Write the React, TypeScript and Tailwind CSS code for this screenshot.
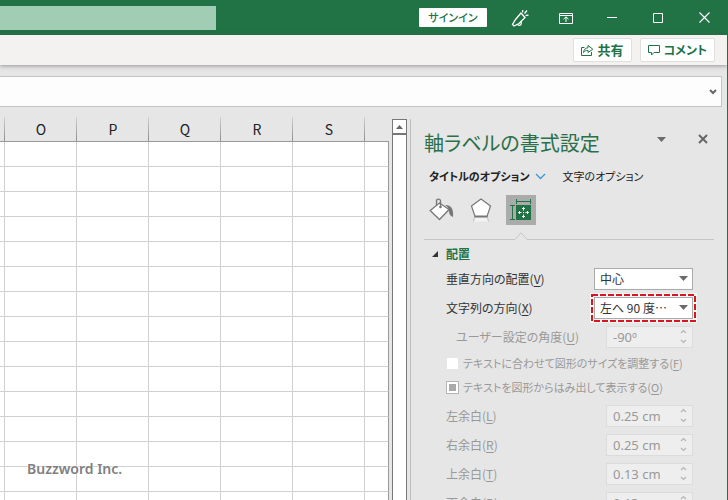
import { ReactNode, useState } from "react";

// ============================================================
// Excel ウィンドウ右側: タイトルバー、シート、書式設定ウィンドウ
// ============================================================

const COLUMNS = ["O", "P", "Q", "R", "S"];
const ROWS = Array.from({ length: 16 }, (_, i) => i);

const MARGINS = [
  { id: "left", label: "左余白", accessKey: "L", value: "0.25 cm" },
  { id: "right", label: "右余白", accessKey: "R", value: "0.25 cm" },
  { id: "top", label: "上余白", accessKey: "T", value: "0.13 cm" },
  { id: "bottom", label: "下余白", accessKey: "B", value: "0.13 cm" },
];

function TitleBar() {
  return (
    <header className="flex h-[35px] shrink-0 items-center bg-[#217346] text-white">
      <input
        type="search"
        aria-label="検索"
        className="h-6 w-[216px] bg-[#a0cdb3] px-2 text-xs outline-none"
      />
      <div className="flex-1" />
      <button
        type="button"
        className="mr-[10px] h-[19px] w-[68px] rounded-[1px] bg-white text-[11px] leading-[19px] font-medium text-[#217346]"
      >
        サインイン
      </button>
      <button type="button" aria-label="新機能" className="flex h-full w-[46px] items-center justify-center">
        <svg width="18" height="18" viewBox="0 0 18 18" fill="none" stroke="currentColor" strokeWidth="1.3">
          <path d="M10 4 4.500 10.500 1.500 15.500 3 17 8 14.500 14 8.500z" />
          <path d="M6.500 15.300c.8 1.700 3.500 1.300 3.700-.6v-2.200M11.500 3.500 11.800 1M13.500 4.500l2.500-3M14.500 6.500l3-.3" />
        </svg>
      </button>
      <button type="button" aria-label="リボンの表示オプション" className="flex h-full w-[46px] items-center justify-center">
        <svg width="14" height="12" viewBox="0 0 14 12" fill="none" stroke="currentColor">
          <path d="M.5 1.5h13v10H.5zM.5 3.5h13M7 10V5M4.5 7.2 7 4.8l2.5 2.4" />
        </svg>
      </button>
      <button type="button" aria-label="最小化" className="flex h-full w-[46px] items-center justify-center">
        <svg width="10" height="10" viewBox="0 0 10 10" stroke="currentColor">
          <path d="M0 4.5h10" />
        </svg>
      </button>
      <button type="button" aria-label="最大化" className="flex h-full w-[46px] items-center justify-center">
        <svg width="10" height="10" viewBox="0 0 10 10" fill="none" stroke="currentColor">
          <path d="M.5.5h9v9h-9z" />
        </svg>
      </button>
      <button type="button" aria-label="閉じる" className="mr-px flex h-full w-[46px] items-center justify-center">
        <svg width="11" height="11" viewBox="0 0 11 11" stroke="currentColor" strokeWidth="1.2">
          <path d="m.5.5 10 10M10.5.5l-10 10" />
        </svg>
      </button>
    </header>
  );
}

function RibbonBar() {
  const button =
    "flex h-6 items-center gap-1 rounded-[2px] border border-[#e1dfdd] bg-white px-[7px] font-bold text-[#217346]";
  return (
    <div className="z-10 flex h-[30px] shrink-0 items-center justify-end gap-2 bg-[#f3f2f1] pr-[12px] shadow-[0_1px_4px_rgba(80,70,70,0.5)]">
      <button type="button" className={`${button} text-[13px]`}>
        <svg width="13" height="12" viewBox="0 0 13 12" fill="none" stroke="currentColor">
          <path d="M3.5 3.5h-3v8h10V8" />
          <path d="M2.500 8.500c.4-3 2-4.600 4.500-4.700V1.500l4.800 3.700L7 8.500V6.300c-2 0-3.300.7-4.500 2.200Z" />
        </svg>
        共有
      </button>
      <button type="button" className={`${button} text-[12px]`}>
        <svg width="12" height="12" viewBox="0 0 12 12" fill="none" stroke="currentColor">
          <path d="M.5 1.5h11v7H6L3.5 11V8.5h-3z" />
        </svg>
        コメント
      </button>
    </div>
  );
}

function FormulaBar() {
  return (
    <div className="mt-[11px] mr-[5px] flex h-[31px] shrink-0 border border-l-0 border-[#c3c3c3] bg-[#fdfdfd]">
      <input type="text" aria-label="数式バー" className="min-w-0 flex-1 px-2 text-sm outline-none" />
      <button type="button" aria-label="数式バーの展開" className="flex w-[17px] items-center justify-center text-[#666]">
        <svg width="8" height="6" viewBox="0 0 8 6" fill="none" stroke="currentColor" strokeWidth="2">
          <path d="m1 1 3 3 3-3" />
        </svg>
      </button>
    </div>
  );
}

function Sheet() {
  const headCell =
    "relative h-[25px] border-b border-[#999] p-0 text-center text-[14px] font-normal text-[#222]";
  const divider =
    "after:absolute after:top-0 after:right-0 after:h-6 after:w-px after:bg-linear-to-b after:from-[#d0d0d0] after:to-[#8f8f8f]";
  const cell = "h-[25px] border-r border-b border-[#d0d0d0] p-0";

  return (
    <div className="relative min-w-0 flex-1 overflow-hidden">
      <table className="w-full table-fixed border-separate border-spacing-0">
        <colgroup>
          <col className="w-[5px]" />
          {COLUMNS.map((c) => (
            <col key={c} className="w-[72px]" />
          ))}
          <col />
        </colgroup>
        <thead>
          <tr>
            <th className={`${headCell} ${divider}`} />
            {COLUMNS.map((c) => (
              <th key={c} scope="col" className={`${headCell} ${divider}`}>
                {c}
              </th>
            ))}
            <th className={headCell} />
          </tr>
        </thead>
        <tbody className="bg-white">
          {ROWS.map((r) => (
            <tr key={r}>
              <td className={cell} />
              {COLUMNS.map((c) => (
                <td key={c} className={cell} />
              ))}
              <td className="h-[25px] border-r border-b border-r-[#999] border-b-[#d0d0d0] p-0" />
            </tr>
          ))}
        </tbody>
      </table>
      <span className="absolute top-[342px] left-[27px] font-['Noto_Sans',sans-serif] text-[14px] leading-5 font-semibold text-[#808080] [text-shadow:0_0_2px_#fff,0_0_2px_#fff]">
        Buzzword Inc.
      </span>
    </div>
  );
}

function ScrollBar() {
  return (
    <div className="mt-[2px] ml-[3px] flex w-[15px] shrink-0 flex-col border border-b-0 border-[#777] bg-white">
      <button type="button" aria-label="上へスクロール" className="flex h-[15px] items-center justify-center border-b-2 border-[#777]">
        <svg width="7" height="4" viewBox="0 0 7 4" fill="#666">
          <path d="M3.5 0 7 4H0z" />
        </svg>
      </button>
    </div>
  );
}

function DownTriangle() {
  return (
    <svg width="9" height="5" viewBox="0 0 9 5" fill="#6b6b6b">
      <path d="M0 0h9L4.5 5z" />
    </svg>
  );
}

function Row({
  id,
  label,
  accessKey,
  indent,
  disabled,
  children,
}: {
  id: string;
  label: string;
  accessKey: string;
  indent?: boolean;
  disabled?: boolean;
  children: ReactNode;
}) {
  return (
    <div
      className={`flex h-[29px] items-center justify-between pr-[34px] ${indent ? "pl-8" : "pl-[22px]"} ${
        disabled ? "text-[#999]" : "text-[#333]"
      }`}
    >
      <label htmlFor={id}>
        {label}(<u className="underline-offset-2">{accessKey}</u>)
      </label>
      {children}
    </div>
  );
}

function Dropdown({ id, options, highlight }: { id: string; options: string[]; highlight?: boolean }) {
  return (
    <div className="relative w-[99px]">
      <select
        id={id}
        className="block h-[22px] w-full appearance-none border border-[#ababab] bg-white pl-[5px] text-[12px] text-[#333] outline-none"
      >
        {options.map((o) => (
          <option key={o}>{o}</option>
        ))}
      </select>
      <span className="pointer-events-none absolute top-2 right-[5px]">
        <DownTriangle />
      </span>
      {highlight && (
        <svg className="pointer-events-none absolute -top-1 -left-1 h-[30px] w-[107px]" fill="none">
          <rect x="2" y="2" width="103" height="26" stroke="#fff" strokeOpacity="0.6" strokeWidth="4" />
          <rect x="2" y="2" width="103" height="26" stroke="#d8141c" strokeWidth="2" strokeDasharray="6 2" />
        </svg>
      )}
    </div>
  );
}

function Spinner({ id, value }: { id: string; value: string }) {
  return (
    <div className="flex h-[22px] w-[87px] items-center border border-[#dcdcdc] bg-[#eee] pr-[5px]">
      <input
        id={id}
        type="text"
        disabled
        defaultValue={value}
        className="min-w-0 flex-1 pl-[6px] font-['Noto_Sans','Noto_Sans_CJK_JP',sans-serif] text-[13px] text-[#999]"
      />
      <svg width="7" height="15" viewBox="0 0 7 15" fill="none" stroke="#b5b5b5" strokeWidth="1.2">
        <path d="m1 4 2.5-2.5L6 4M1 11l2.5 2.5L6 11" />
      </svg>
    </div>
  );
}

function CheckRow({ id, label, accessKey, mixed }: { id: string; label: string; accessKey: string; mixed?: boolean }) {
  return (
    <div className="flex h-6 items-center gap-1 pl-[22px] text-[11px] text-[#999]">
      <span className="relative flex size-[13px] shrink-0">
        <input
          id={id}
          type="checkbox"
          disabled
          className={`size-[13px] appearance-none border bg-white ${mixed ? "border-[#b5b5b5]" : "border-[#e6e6e6]"}`}
        />
        {mixed && <span className="absolute inset-[3px] bg-[#aaa]" />}
      </span>
      <label htmlFor={id} className="whitespace-nowrap">
        {label}(<u className="underline-offset-2">{accessKey}</u>)
      </label>
    </div>
  );
}

function FormatPane() {
  const [open, setOpen] = useState(true);

  return (
    <aside className="mt-[2px] ml-[3px] w-[317px] shrink-0 overflow-hidden border-l border-[#bdbdbd] pl-[13px] text-[12px] leading-4">
      <div className="mt-[6px] flex h-9 items-center pr-[19px]">
        <h2 className="flex-1 text-[20px] leading-9 font-normal whitespace-nowrap text-[#2a7048]">軸ラベルの書式設定</h2>
        <button type="button" aria-label="ウィンドウのオプション" className="mr-8 pb-2">
          <DownTriangle />
        </button>
        <button type="button" aria-label="閉じる" className="pb-2">
          <svg width="10" height="10" viewBox="0 0 10 10" stroke="#666" strokeWidth="2">
            <path d="m1 1 8 8M9 1 1 9" />
          </svg>
        </button>
      </div>

      <div className="mt-px flex h-7 items-center pl-[5px] text-[11px] whitespace-nowrap text-[#222]">
        <button type="button" className="flex items-center gap-[6px] font-bold">
          タイトルのオプション
          <svg width="11" height="7" viewBox="0 0 11 7" fill="none" stroke="#3a96dd" strokeWidth="1.3">
            <path d="m1 1 4.5 4.5L10 1" />
          </svg>
        </button>
        <button type="button" className="ml-4">
          文字のオプション
        </button>
      </div>

      <div className="mt-[5px] flex h-[30px] items-center pl-[2px]">
        <button type="button" aria-label="塗りつぶしと線" className="flex h-[30px] w-10 items-center pl-[3px]">
          <svg width="26" height="26" viewBox="0 0 26 26" fill="none">
            <path d="M16 8c5-.5 9 3 8 12-2-.5-4-2.5-4-5.500 0-3-1.500-5-4-6.500z" fill="#777" />
            <path d="M10.500 6 20 12.500 10.500 22.500 1.200 13.500z" fill="#fff" stroke="#777" strokeWidth="1.300" />
            <path d="M7.500 8.500V4c0-2.600 4-2.600 4 0v6" stroke="#777" strokeWidth="1.300" />
            <circle cx="11.500" cy="10" r="1.300" fill="#777" />
          </svg>
        </button>
        <button type="button" aria-label="効果" className="flex h-[30px] w-10 items-center pl-[3px]">
          <svg width="24" height="26" viewBox="0 0 24 26" fill="none">
            <path d="m5.5 20.5-1 4h15l-1-4z" fill="#f3f3f3" />
            <path d="m5.5 20.5-1 4M18.500 20.500l1 4" stroke="#bbb" />
            <path d="M12 2 21.500 9 18 19.500H6L2.500 9z" fill="#fff" stroke="#777" strokeWidth="1.200" />
            <path d="M5.500 19.500h13" stroke="#777" strokeWidth="2" />
          </svg>
        </button>
        <button type="button" aria-label="サイズとプロパティ" className="size-[30px] bg-[#ababab]">
          <svg width="30" height="30" viewBox="0 0 30 30" fill="none">
            <path d="M10 10h15v15H10z" fill="#217346" />
            <path d="M10.500 4v5M24.500 4v5M10.500 6.500h14M4 10.500h5M4 24.500h5M6.500 10.500v14" stroke="#217346" />
            <path
              d="M17.500 12.500v3M17.500 19.500v3M12.500 17.500h3M19.500 17.500h3M16 14l1.500-1.500L19 14M16 21l1.500 1.500L19 21M14 16l-1.500 1.500L14 19M21 16l1.500 1.500L21 19M17 17.500h1"
              stroke="#fff"
            />
          </svg>
        </button>
      </div>

      {/* 選択中のアイコンを指す区切り線 */}
      <div className="flex h-[15px] items-end pr-[13px]">
        <div className="w-[90px] border-b border-[#c6c6c6]" />
        <svg width="14" height="8" viewBox="0 0 14 8" fill="none" stroke="#c6c6c6">
          <path d="M0 7.5h1L7 .8l6 6.700h1" />
        </svg>
        <div className="flex-1 border-b border-[#c6c6c6]" />
      </div>

      <button
        type="button"
        aria-expanded={open}
        onClick={() => setOpen(!open)}
        className="flex h-6 items-center gap-2 pt-1 pl-2 font-bold text-[#217346]"
      >
        <svg width="6" height="6" viewBox="0 0 6 6" fill="#333">
          <path d="M6 0v6H0z" />
        </svg>
        配置
      </button>

      {open && (
        <div>
          <Row id="valign" label="垂直方向の配置" accessKey="V">
            <Dropdown id="valign" options={["中心", "上", "下"]} />
          </Row>
          <Row id="direction" label="文字列の方向" accessKey="X">
            <Dropdown id="direction" options={["左へ 90 度…", "横書き", "縦書き"]} highlight />
          </Row>
          <Row id="angle" label="ユーザー設定の角度" accessKey="U" indent disabled>
            <Spinner id="angle" value="-90º" />
          </Row>
          <div className="pb-[2px]">
            <CheckRow id="autosize" label="テキストに合わせて図形のサイズを調整する" accessKey="F" />
            <CheckRow id="overflow" label="テキストを図形からはみ出して表示する" accessKey="O" mixed />
          </div>
          {MARGINS.map((m) => (
            <Row key={m.id} id={m.id} label={m.label} accessKey={m.accessKey} disabled>
              <Spinner id={m.id} value={m.value} />
            </Row>
          ))}
        </div>
      )}
    </aside>
  );
}

export default function App() {
  return (
    <div className="flex h-screen flex-col overflow-hidden bg-[#e6e6e6] font-['Noto_Sans_CJK_JP',sans-serif] [font-feature-settings:'palt']">
      <TitleBar />
      <div className="flex min-h-0 flex-1 flex-col border-r border-[#217346]">
        <RibbonBar />
        <FormulaBar />
        <main className="flex min-h-0 flex-1 pt-[10px]">
          <Sheet />
          <ScrollBar />
          <FormatPane />
        </main>
      </div>
    </div>
  );
}
